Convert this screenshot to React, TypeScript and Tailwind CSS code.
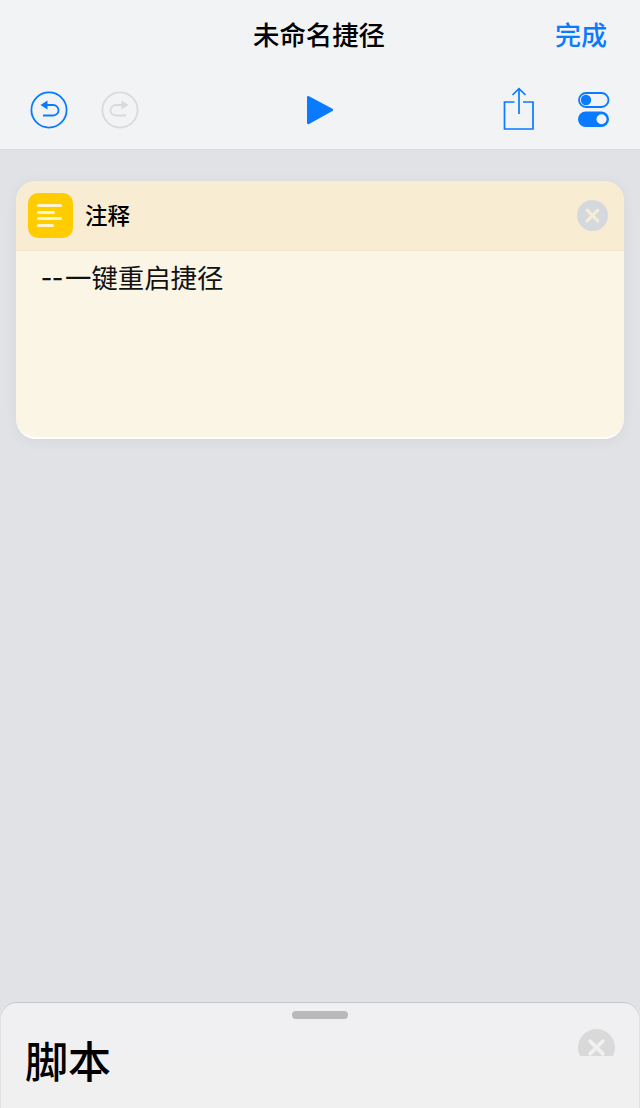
import React from 'react';

const cjk = 'font-["Noto_Sans_CJK_SC",sans-serif]';

const UndoIcon: React.FC<{ color: string; flip?: boolean }> = ({ color, flip }) => (
  <svg width="38" height="38" viewBox="0 0 38 38" fill="none" className={flip ? '-scale-x-100' : ''}>
    <circle cx="19" cy="19" r="17.6" stroke={color} strokeWidth="1.8" />
    <path d="M13 24.5h10.3a5.25 5.25 0 0 0 0-10.5H15" stroke={color} strokeWidth="1.8" />
    <path d="M10.5 14l7-4.5v9z" fill={color} />
  </svg>
);

const ShareIcon = () => (
  <svg width="32" height="44" viewBox="0 0 32 44" fill="none" stroke="#0a7aff" strokeWidth="1.7">
    <path d="M11.5 15H1.5v27H30V15H20" />
    <path d="M16 27V2" />
    <path d="M9.5 8L16 1.7 22.5 8" />
  </svg>
);

const TogglesIcon = () => (
  <svg width="32" height="36" viewBox="0 0 32 36" fill="none">
    <rect x="1" y="1" width="29.5" height="14" rx="7" stroke="#0a7aff" strokeWidth="1.8" />
    <circle cx="8" cy="8" r="5.2" fill="#0a7aff" />
    <rect x="0" y="19.5" width="31" height="15.5" rx="7.7" fill="#0a7aff" />
    <circle cx="23.5" cy="27.2" r="5" fill="#f2f3f5" />
  </svg>
);

const CloseCircle: React.FC<{ size: number; bg: string; stroke: string }> = ({ size, bg, stroke }) => (
  <div className={`flex items-center justify-center rounded-full ${bg}`} style={{ width: size, height: size }}>
    <svg width={size} height={size} viewBox="0 0 32 32" fill="none" stroke={stroke} strokeWidth="3.2" strokeLinecap="round">
      <path d="M10.5 10.5l11 11M21.5 10.5l-11 11" />
    </svg>
  </div>
);

const App: React.FC = () => {
  return (
    <div className={`flex h-[1108px] w-[640px] flex-col overflow-hidden bg-[#e1e2e6] ${cjk}`}>
      <header className="h-[150px] shrink-0 border-b border-[#d9dadd] bg-[#f2f3f5]">
        <div className="flex h-[71px] items-center justify-between pb-[3px] pl-[253px] pr-[33px]">
          <h1 className="text-[26.4px] leading-none font-medium text-black">未命名捷径</h1>
          <button className="text-[26px] leading-none font-medium text-[#0a7aff]">完成</button>
        </div>
        <div className="flex h-[78px] items-center pl-[30px] pr-[30px]">
          <UndoIcon color="#0a7aff" />
          <div className="ml-[33px]">
            <UndoIcon color="#d9dadc" flip />
          </div>
          <svg width="28" height="30" viewBox="0 0 28 30" className="ml-[167px]">
            <path d="M1 2.5c0-1.2 1-1.8 2-1.2l23.5 12.5c.9.5.9 1.8 0 2.3L3 29c-1 .5-2-.1-2-1.2z" fill="#0a7aff" />
          </svg>
          <div className="ml-[169px] -mt-[2px]">
            <ShareIcon />
          </div>
          <div className="ml-[43px] -mt-[1px]">
            <TogglesIcon />
          </div>
        </div>
      </header>

      <main className="flex-1 px-4 pt-[31px]">
        <section className="h-[258px] overflow-hidden rounded-[20px] border-b-2 border-white bg-[#fbf5e6] shadow-[0_2px_14px_rgba(0,0,0,0.05)]">
          <div className="flex h-[70px] items-center border-b border-[#f3e7cb] bg-[#f8edd2] pl-3 pr-4">
            <div className="flex h-[45px] w-[45px] flex-col items-start justify-center gap-[3.7px] rounded-[10px] bg-[#ffcc00] pl-[9px]">
              <span className="h-[3px] w-[25px] rounded-full bg-[#fff6cf]" />
              <span className="h-[3px] w-[18px] rounded-full bg-[#fff6cf]" />
              <span className="h-[3px] w-[25px] rounded-full bg-[#fff6cf]" />
              <span className="h-[3px] w-[17px] rounded-full bg-[#fff6cf]" />
            </div>
            <span className="ml-[12px] -mt-[3px] text-[22.5px] leading-none font-medium text-black">注释</span>
            <div className="ml-auto">
              <CloseCircle size={31} bg="bg-[#d5d8dc]" stroke="#f8edd2" />
            </div>
          </div>
          <p className="whitespace-nowrap pl-[25px] pt-[7px] text-[26.4px] leading-[32px] text-[#111]">
            <span className="inline-block w-[24px] text-[32px] leading-none">--</span>一键重启捷径
          </p>
        </section>
      </main>

      <footer className="relative mx-[1px] h-[106px] shrink-0 rounded-t-[16px] border-t border-[#c4c5c8] bg-[#f0f0f2]">
        <div className="mx-auto mt-[8px] h-[8px] w-[56px] rounded-full bg-[#b9b9bb]" />
        <div className="absolute right-[24px] top-[26px]">
          <CloseCircle size={37} bg="bg-[#d9d9da]" stroke="#f0f0f2" />
        </div>
        <div className="absolute inset-x-0 bottom-0 h-[52px] bg-[#f0f0f0]" />
        <div className="relative pl-[24px] pt-[10px] text-[43px] leading-[60px] font-medium text-black">脚本</div>
      </footer>
    </div>
  );
};

export default App;
